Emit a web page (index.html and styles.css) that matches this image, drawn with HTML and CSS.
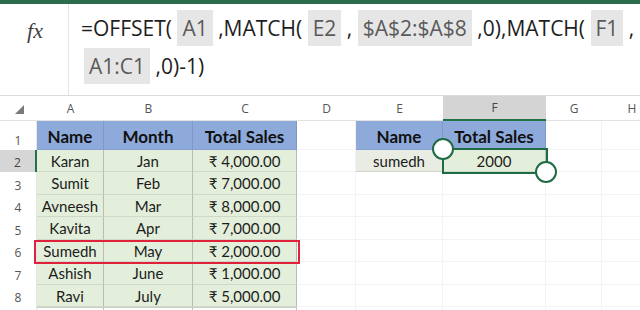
FILE: index.html
```html
<!DOCTYPE html>
<html>
<head>
<meta charset="utf-8">
<link rel="stylesheet" href="styles.css">
</head>
<body>
<div class="app">
  <div class="ribbon-edge"></div>
  <div class="formula-bar">
    <div class="fx">fx</div>
    <div class="formula">
      <div class="fline">=OFFSET( <span class="ref">A1</span> ,MATCH( <span class="ref">E2</span> , <span class="ref">$A$2:$A$8</span> ,0),MATCH( <span class="ref">F1</span> ,</div>
      <div class="fline second"><span class="ref">A1:C1</span> ,0)-1)</div>
    </div>
  </div>
  <div class="sheet">
    <div class="c ch corner"><svg width="9" height="9" viewBox="0 0 9 9"><polygon points="9,0 9,9 0,9" fill="#7a7a7a"/></svg></div>
    <div class="c ch">A</div><div class="c ch">B</div><div class="c ch">C</div><div class="c ch">D</div><div class="c ch">E</div><div class="c ch sel">F</div><div class="c ch">G</div><div class="c ch">H</div>

    <div class="c rh">1</div>
    <div class="c hd">Name</div><div class="c hd">Month</div><div class="c hd">Total Sales</div><div class="c"></div><div class="c hd">Name</div><div class="c hd">Total Sales</div><div class="c"></div><div class="c"></div>

    <div class="c rh sel">2</div>
    <div class="c dt">Karan</div><div class="c dt">Jan</div><div class="c dt">₹ 4,000.00</div><div class="c"></div><div class="c dt gray">sumedh</div><div class="c dt">2000</div><div class="c"></div><div class="c"></div>

    <div class="c rh">3</div>
    <div class="c dt">Sumit</div><div class="c dt">Feb</div><div class="c dt">₹ 7,000.00</div><div class="c"></div><div class="c"></div><div class="c"></div><div class="c"></div><div class="c"></div>

    <div class="c rh">4</div>
    <div class="c dt">Avneesh</div><div class="c dt">Mar</div><div class="c dt">₹ 8,000.00</div><div class="c"></div><div class="c"></div><div class="c"></div><div class="c"></div><div class="c"></div>

    <div class="c rh">5</div>
    <div class="c dt">Kavita</div><div class="c dt">Apr</div><div class="c dt">₹ 7,000.00</div><div class="c"></div><div class="c"></div><div class="c"></div><div class="c"></div><div class="c"></div>

    <div class="c rh">6</div>
    <div class="c dt">Sumedh</div><div class="c dt">May</div><div class="c dt">₹ 2,000.00</div><div class="c"></div><div class="c"></div><div class="c"></div><div class="c"></div><div class="c"></div>

    <div class="c rh">7</div>
    <div class="c dt">Ashish</div><div class="c dt">June</div><div class="c dt">₹ 1,000.00</div><div class="c"></div><div class="c"></div><div class="c"></div><div class="c"></div><div class="c"></div>

    <div class="c rh">8</div>
    <div class="c dt">Ravi</div><div class="c dt">July</div><div class="c dt">₹ 5,000.00</div><div class="c"></div><div class="c"></div><div class="c"></div><div class="c"></div><div class="c"></div>

    <div class="c rh"></div>
    <div class="c tl"></div><div class="c tl"></div><div class="c tl"></div><div class="c"></div><div class="c"></div><div class="c"></div><div class="c"></div><div class="c"></div>

    <div class="red-box"></div>
    <div class="selection"></div>
    <div class="handle h-tl"></div>
    <div class="handle h-br"></div>
  </div>
</div>
</body>
</html>
```

FILE: styles.css
```css
* { box-sizing: border-box; margin: 0; padding: 0; }
html, body { width: 640px; height: 310px; overflow: hidden; background: #fff; }
body { font-family: "Open Sans", sans-serif; }

.app { display: flex; flex-direction: column; height: 310px; }

.ribbon-edge { height: 4px; flex: none; background: #2c6b4b; }

.formula-bar {
  display: flex;
  flex: none;
  height: 92px;
  border-bottom: 1px solid #dadada;
  background: #fff;
}
.fx {
  width: 69px;
  flex: none;
  border-right: 1px solid #e4e4e4;
  font-family: "Liberation Serif", serif;
  font-style: italic;
  font-size: 22px;
  line-height: 26px;
  color: #3f3f3f;
  text-align: center;
  padding-top: 14px;
  padding-left: 2px;
}
.formula {
  flex: 1;
  padding: 5px 0 0 12px;
  font-size: 21px;
  line-height: 38px;
  color: #1e1e1e;
  white-space: nowrap;
  overflow: hidden;
}
.fline.second { padding-left: 3px; }
.ref { background: #e6e6e6; color: #5a5a5a; padding: 4px 5px; }

.sheet {
  position: relative;
  flex: 1;
  display: grid;
  grid-template-columns: 37px 67px 89px 104px 59px 87px 103px 56px 60px;
  grid-template-rows: 25px 29px 22px 23px 22px 23px 22px 23px 22px 22px;
  font-family: Lato, "Noto Sans", "DejaVu Sans", sans-serif;
  overflow: hidden;
}
.c {
  display: flex;
  align-items: center;
  justify-content: center;
  border-right: 1px solid #f3f3f3;
  border-bottom: 1px solid #f3f3f3;
  font-size: 15px;
  color: #1c1c1c;
  white-space: nowrap;
}
.ch {
  font-family: "Open Sans", sans-serif;
  font-size: 12px;
  color: #555;
  background: #fff;
  border-right: none;
  border-bottom: 1px solid #e2e2e2;
}
.ch.corner { justify-content: flex-end; padding-right: 13px; padding-top: 2px; }
.ch.sel { background: #d4d4d4; border-bottom: 2px solid #217346; color: #444; }
.rh {
  font-family: "Open Sans", sans-serif;
  font-size: 12px;
  color: #555;
  align-items: flex-end;
  padding-bottom: 1px;
  border-bottom: none;
  border-right: 1px solid #e6e6e6;
}
.rh.sel { background: #d6d6d6; border-right: 2px solid #217346; color: #444; }

.hd {
  background: #8eaadb;
  font-weight: 700;
  font-size: 17px;
  color: #111;
  padding-top: 2px;
  border-right: 1px solid #7f98c6;
  border-bottom: 1px solid #86a0d0;
}
.dt {
  background: #e3efdb;
  border-right: 1px solid #b9bdb6;
  border-bottom: 1px solid #d0d8ca;
}
.dt.gray { background: #e8ece3; }
.tl { border-right: 1px solid #c4c4c4; border-top: 1px solid #c9cfc5; }

.red-box {
  position: absolute;
  left: 34px;
  top: 144px;
  width: 266px;
  height: 24px;
  border: 2px solid #e0213a;
}
.selection {
  position: absolute;
  left: 442px;
  top: 52px;
  width: 106px;
  height: 26px;
  border: 2px solid #1f6b46;
}
.handle {
  position: absolute;
  width: 22px;
  height: 22px;
  border-radius: 50%;
  background: #fff;
  border: 2px solid #1f6b46;
}
.h-tl { left: 432px; top: 42px; }
.h-br { left: 535px; top: 65px; }
```
